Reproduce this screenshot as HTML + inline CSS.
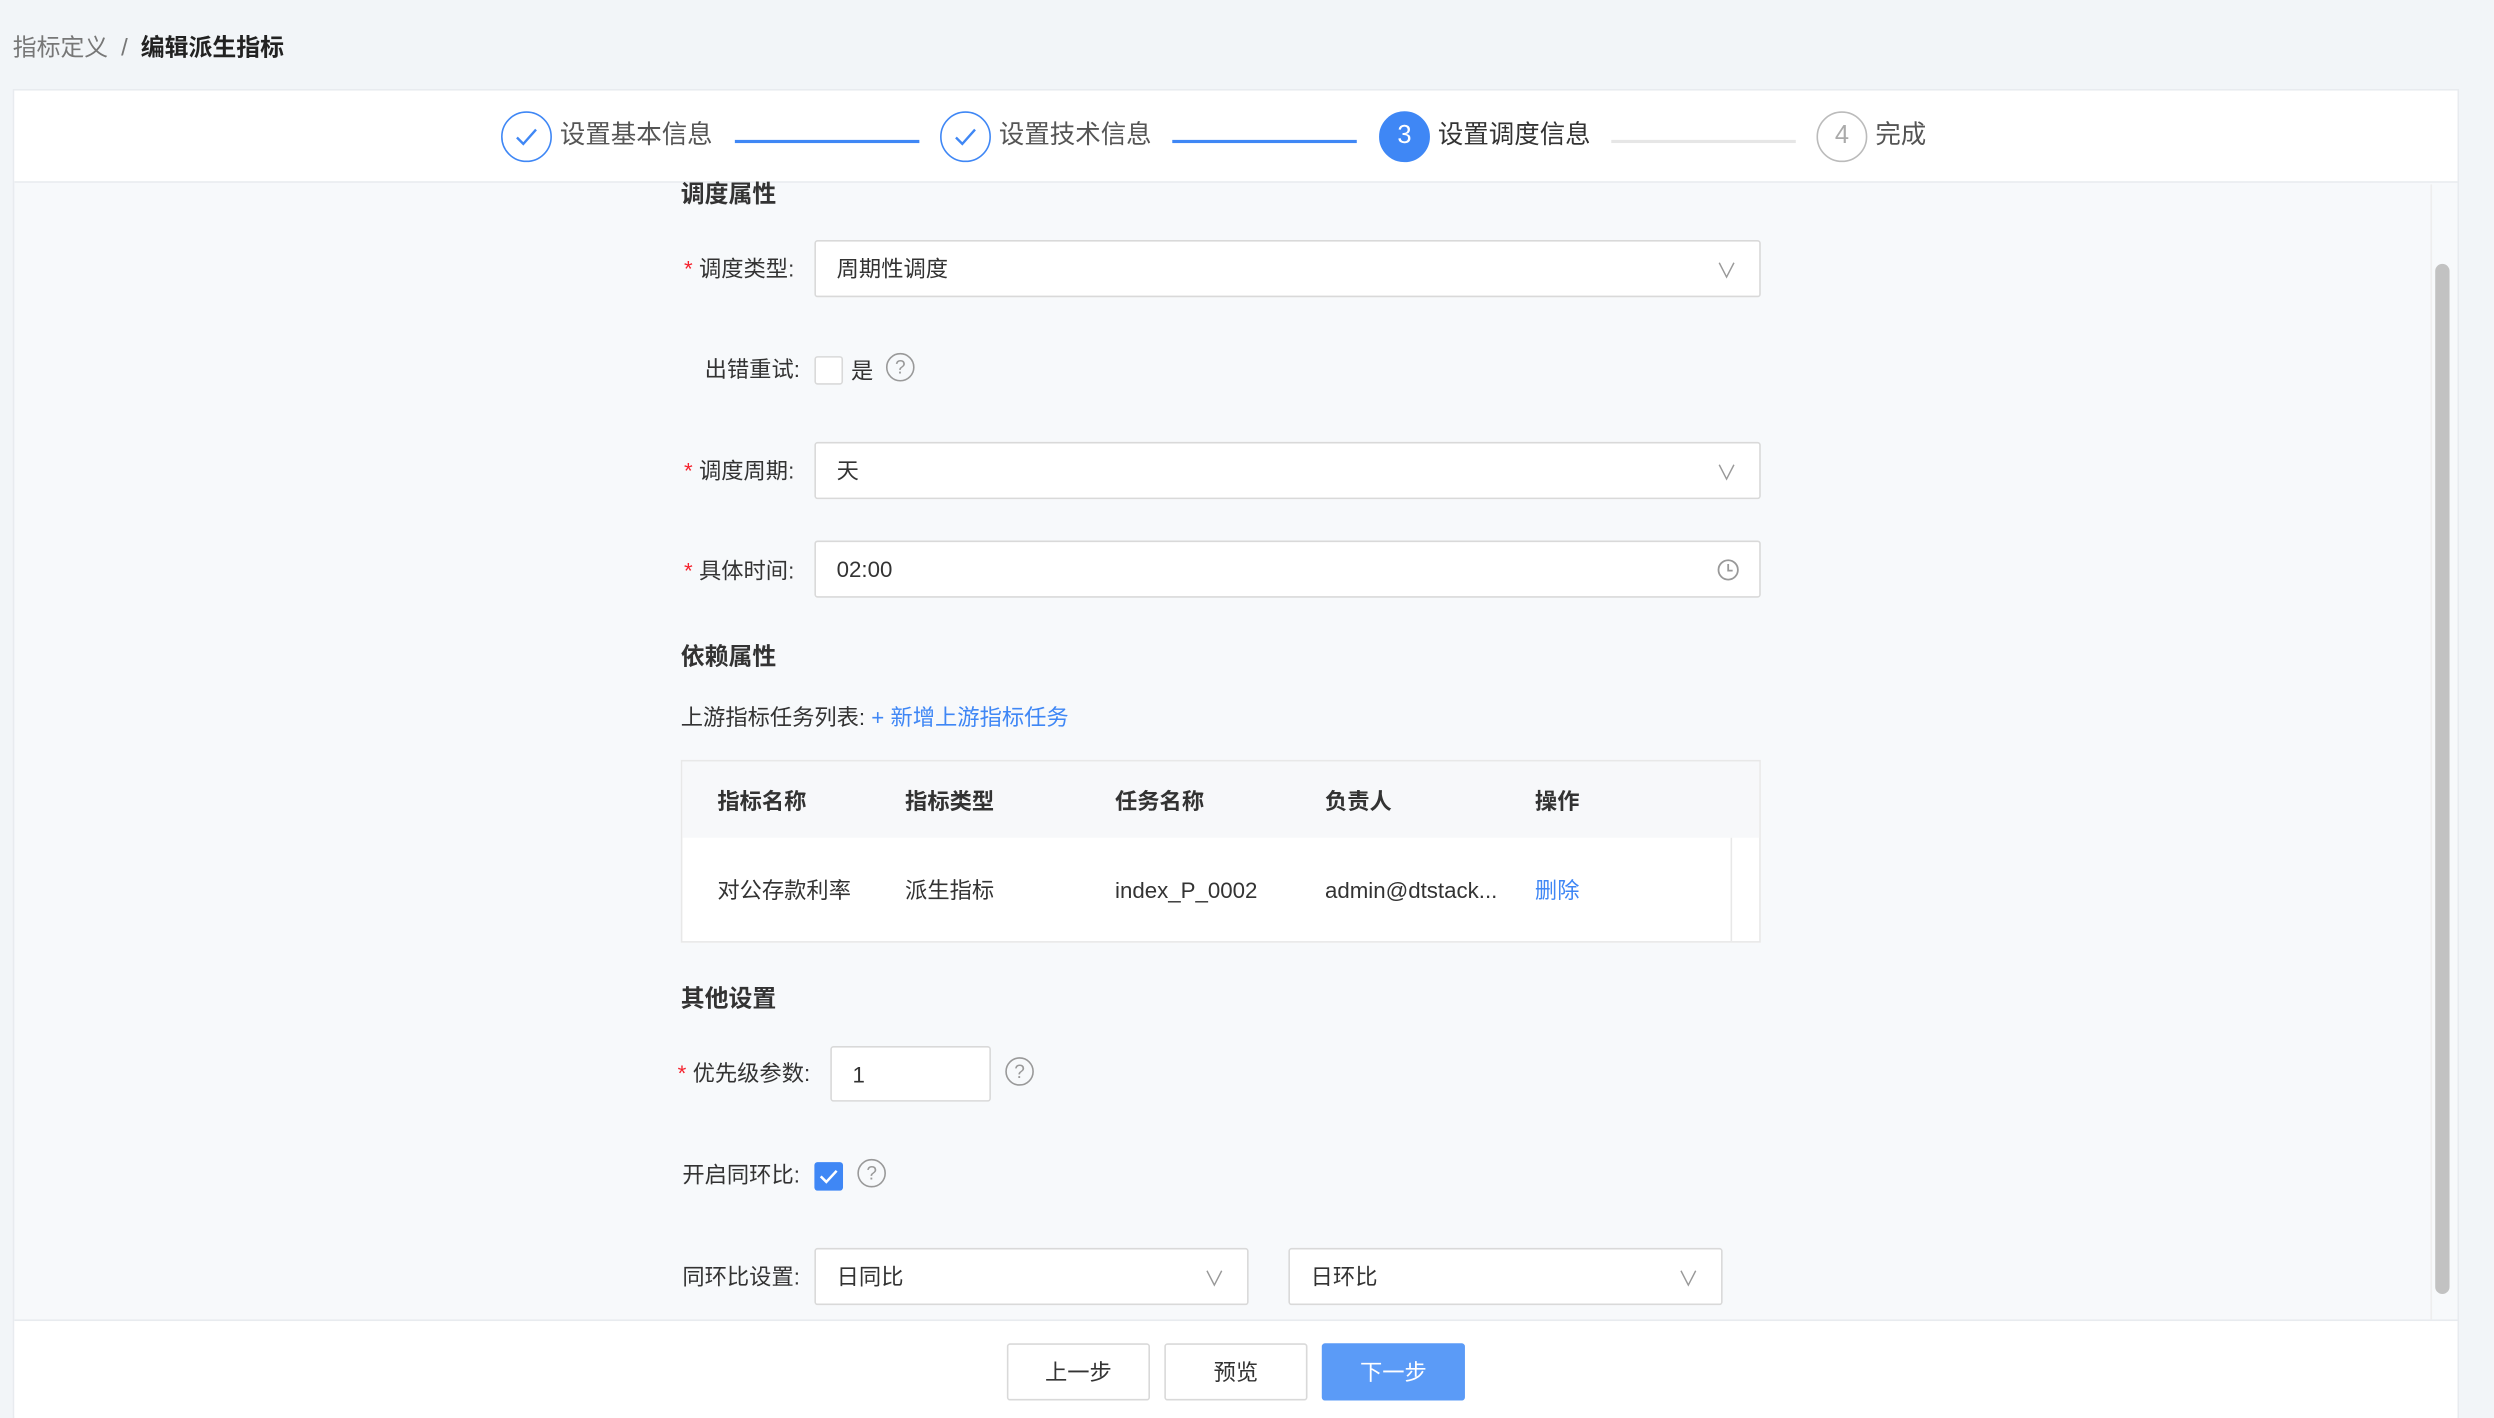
<!DOCTYPE html><html><head><meta charset="utf-8"><style>
*{box-sizing:border-box;margin:0;padding:0}
html,body{width:2494px;height:1418px;overflow:hidden;background:#f2f5f8}
#w{width:1568px;height:892px;transform:scale(1.5906,1.5897);transform-origin:0 0;position:relative;font-family:"Liberation Sans","Noto Sans CJK SC",sans-serif;color:#333;font-size:14px}
.a{position:absolute}
.t{position:absolute;white-space:nowrap;line-height:1}
.circ{position:absolute;width:32px;height:32px;border-radius:50%;border:1.5px solid #3f87f5;display:flex;align-items:center;justify-content:center;font-size:16px}
.inp{position:absolute;background:#fff;border:1px solid #d9d9d9;border-radius:2px;height:36px;display:flex;align-items:center;padding-left:13px;font-size:14px;color:#333}
.lbl{position:absolute;font-size:14px;color:#333;text-align:right;white-space:nowrap;line-height:1}
.req{color:#f5222d;margin-right:4px}
.h{position:absolute;font-size:15px;font-weight:bold;color:#333;line-height:1}
.q{position:absolute;width:18px;height:18px;border:1px solid #999;border-radius:50%;font-size:12px;color:#999;display:flex;align-items:center;justify-content:center}
.btn{position:absolute;top:845px;height:36px;width:90px;border:1px solid #d9d9d9;background:#fff;border-radius:2px;display:flex;align-items:center;justify-content:center;font-size:14px}
</style></head><body><div id="w">
<div class="t" style="left:8px;top:23px;font-size:15px;color:#777">指标定义 <span style="margin:0 4px">/</span> <span style="color:#222;font-weight:bold">编辑派生指标</span></div>
<div class="a" style="left:8px;top:56px;width:1538px;height:836px;background:#f7f9fb;border:1px solid #e8ebef"></div>
<div class="a" style="left:9px;top:57px;width:1536px;height:58px;background:#fff;border-bottom:1px solid #e8ebef"></div>
<div class="circ" style="left:315px;top:70px;color:#3f87f5"><svg width="16" height="16" viewBox="0 0 16 16"><path d="M2 8.5l4 4 8-9" fill="none" stroke="#3f87f5" stroke-width="1.5"/></svg></div>
<div class="t" style="left:352px;top:78px;font-size:16px;color:#555">设置基本信息</div>
<div class="a" style="left:462px;top:88px;width:116px;height:2px;background:#3f87f5"></div>
<div class="circ" style="left:591px;top:70px"><svg width="16" height="16" viewBox="0 0 16 16"><path d="M2 8.5l4 4 8-9" fill="none" stroke="#3f87f5" stroke-width="1.5"/></svg></div>
<div class="t" style="left:628px;top:78px;font-size:16px;color:#555">设置技术信息</div>
<div class="a" style="left:737px;top:88px;width:116px;height:2px;background:#3f87f5"></div>
<div class="circ" style="left:867px;top:70px;background:#3f87f5;color:#fff">3</div>
<div class="t" style="left:904px;top:78px;font-size:16px;color:#333">设置调度信息</div>
<div class="a" style="left:1013px;top:88px;width:116px;height:2px;background:#e6e6e6"></div>
<div class="circ" style="left:1142px;top:70px;border-color:#bbb;color:#aaa">4</div>
<div class="t" style="left:1179px;top:78px;font-size:16px;color:#555">完成</div>
<div class="a" style="left:1528px;top:116px;width:14px;height:714px;background:#f7f9fb;border-left:1px solid #eee"></div>
<div class="a" style="left:1531px;top:166px;width:9px;height:648px;background:#c2c2c2;border-radius:5px"></div>

<div class="h" style="left:428px;top:115px">调度属性</div>
<div class="lbl" style="left:430px;top:162px"><span class="req">*</span>调度类型:</div>
<div class="inp" style="left:512px;top:151px;width:595px">周期性调度<span class="a" style="right:14px;color:#999;font-size:13px">∨</span></div>
<div class="lbl" style="left:443px;top:225px">出错重试:</div>
<div class="a" style="left:512px;top:224px;width:18px;height:18px;border:1px solid #d9d9d9;background:#fff;border-radius:2px"></div>
<div class="t" style="left:535px;top:226px">是</div>
<div class="q" style="left:557px;top:222px">?</div>
<div class="lbl" style="left:430px;top:289px"><span class="req">*</span>调度周期:</div>
<div class="inp" style="left:512px;top:278px;width:595px">天<span class="a" style="right:14px;color:#999;font-size:13px">∨</span></div>
<div class="lbl" style="left:430px;top:352px"><span class="req">*</span>具体时间:</div>
<div class="inp" style="left:512px;top:340px;width:595px">02:00<svg class="a" style="right:12px" width="15" height="15" viewBox="0 0 16 16"><circle cx="8" cy="8" r="6.5" fill="none" stroke="#999" stroke-width="1.2"/><path d="M8 4v4.5h3" fill="none" stroke="#999" stroke-width="1.2"/></svg></div>

<div class="h" style="left:428px;top:406px">依赖属性</div>
<div class="t" style="left:428px;top:444px">上游指标任务列表: <span style="color:#3f87f5">+ 新增上游指标任务</span></div>
<div class="a" style="left:428px;top:478px;width:679px;height:115px;border:1px solid #e8e8e8;background:#fff"></div>
<div class="a" style="left:429px;top:479px;width:677px;height:48px;background:#f7f8fa"></div>
<div class="a" style="left:1088px;top:527px;width:1px;height:65px;background:#e8e8e8"></div>
<div class="t" style="left:451px;top:497px;font-weight:bold;color:#333">指标名称</div>
<div class="t" style="left:569px;top:497px;font-weight:bold">指标类型</div>
<div class="t" style="left:701px;top:497px;font-weight:bold">任务名称</div>
<div class="t" style="left:833px;top:497px;font-weight:bold">负责人</div>
<div class="t" style="left:965px;top:497px;font-weight:bold">操作</div>
<div class="t" style="left:451px;top:553px">对公存款利率</div>
<div class="t" style="left:569px;top:553px">派生指标</div>
<div class="t" style="left:701px;top:553px">index_P_0002</div>
<div class="t" style="left:833px;top:553px">admin@dtstack...</div>
<div class="t" style="left:965px;top:553px;color:#3f87f5">删除</div>

<div class="h" style="left:428px;top:621px">其他设置</div>
<div class="lbl" style="left:426px;top:668px"><span class="req">*</span>优先级参数:</div>
<div class="inp" style="left:522px;top:658px;width:101px;height:35px">1</div>
<div class="q" style="left:632px;top:665px">?</div>
<div class="lbl" style="left:429px;top:732px">开启同环比:</div>
<div class="a" style="left:512px;top:731px;width:18px;height:18px;background:#3f87f5;border-radius:2px"><svg width="18" height="18" viewBox="0 0 18 18"><path d="M4 9l3.5 3.5L14 5.5" fill="none" stroke="#fff" stroke-width="1.6"/></svg></div>
<div class="q" style="left:539px;top:729px">?</div>
<div class="lbl" style="left:429px;top:796px">同环比设置:</div>
<div class="inp" style="left:512px;top:785px;width:273px">日同比<span class="a" style="right:14px;color:#999;font-size:13px">∨</span></div>
<div class="inp" style="left:810px;top:785px;width:273px">日环比<span class="a" style="right:14px;color:#999;font-size:13px">∨</span></div>

<div class="a" style="left:9px;top:830px;width:1536px;height:62px;background:#fff;border-top:1px solid #e8ebef"></div>
<div class="btn" style="left:633px">上一步</div>
<div class="btn" style="left:732px">预览</div>
<div class="btn" style="left:831px;background:#5b9bf7;border-color:#5b9bf7;color:#fff">下一步</div>
</div></body></html>
